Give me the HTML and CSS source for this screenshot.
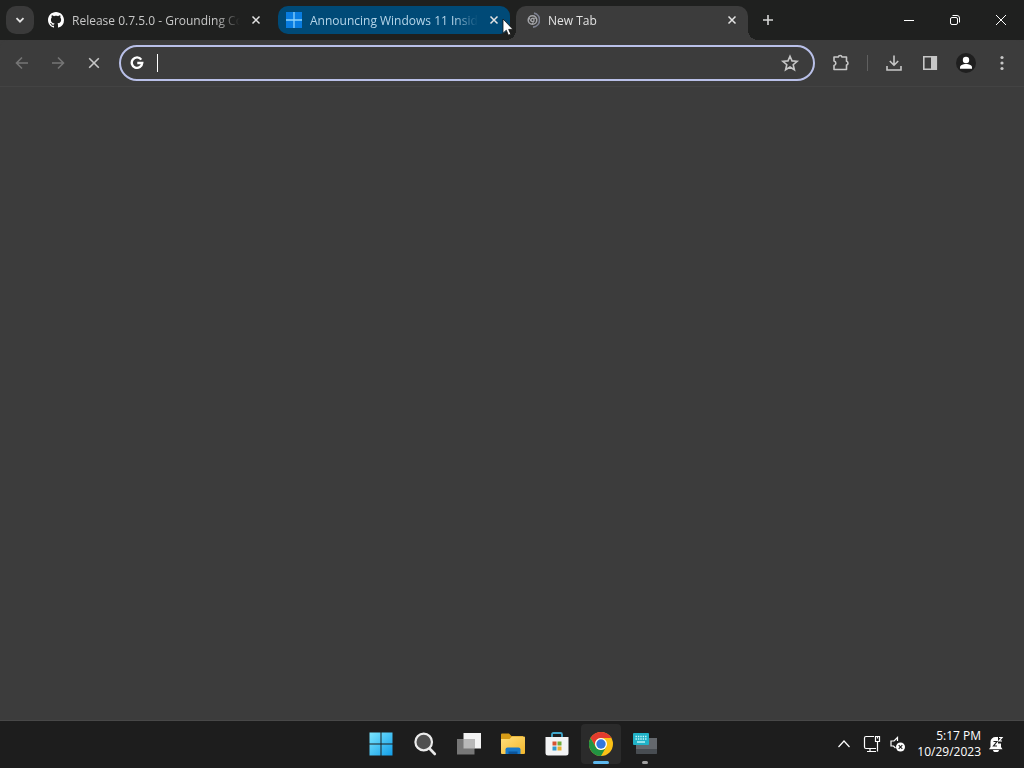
FILE: index.html
```html
<!DOCTYPE html>
<html lang="en">
<head>
  <meta charset="UTF-8">
  <title>New Tab</title>
  <link rel="stylesheet" href="styles.css">
</head>
<body>
  <header class="tab-strip">
    <button class="tab-search" aria-label="Search tabs">
      <svg width="16" height="16" viewBox="0 0 16 16"><path d="M4.5 6.2 8 9.7l3.500-3.500" fill="none" stroke="#e3e3e3" stroke-width="1.800"/></svg>
    </button>

    <div class="tab">
      <svg class="favicon" viewBox="0 0 16 16"><path fill="#fff" d="M8 0C3.580 0 0 3.580 0 8c0 3.540 2.290 6.530 5.470 7.590.4.070.55-.17.55-.38 0-.19-.01-.82-.01-1.490-2.010.37-2.530-.49-2.690-.94-.09-.23-.48-.94-.82-1.130-.28-.15-.68-.52-.01-.53.63-.01 1.080.58 1.230.82.72 1.210 1.870.87 2.330.66.07-.52.28-.87.51-1.070-1.780-.2-3.640-.89-3.640-3.950 0-.87.31-1.590.82-2.150-.08-.2-.36-1.020.08-2.120 0 0 .67-.21 2.200.82.64-.18 1.320-.27 2-.27s1.360.09 2 .27c1.530-1.040 2.200-.82 2.200-.82.44 1.100.16 1.920.08 2.120.51.56.82 1.270.82 2.150 0 3.070-1.870 3.750-3.650 3.950.29.25.54.73.54 1.480 0 1.070-.01 1.930-.01 2.200 0 .21.15.46.55.38A8.010 8.010 0 0 0 16 8c0-4.420-3.580-8-8-8z"/></svg>
      <span class="tab-title">Release 0.7.5.0 - Grounding Co</span>
      <button class="tab-close" aria-label="Close tab"><svg width="16" height="16" viewBox="0 0 16 16"><path d="m4.500 4.500 7 7m0-7-7 7"/></svg></button>
    </div>

    <div class="tab tab-hover">
      <svg class="favicon" viewBox="0 0 16 16"><path fill="#087ce0" d="M0 0h16v16H0z"/><path d="M8 0v16M0 8h16" stroke="#8bd2fa" stroke-width="1.300"/></svg>
      <span class="tab-title">Announcing Windows 11 Insid</span>
      <button class="tab-close" aria-label="Close tab"><svg width="16" height="16" viewBox="0 0 16 16"><path d="m4.500 4.500 7 7m0-7-7 7"/></svg></button>
    </div>

    <div class="tab tab-active">
      <svg class="favicon" viewBox="0 0 16 16" fill="none" stroke="#a4a5a9">
        <circle cx="8.500" cy="8" r="4.300" stroke-width="1.500"/>
        <circle cx="8.500" cy="8" r="1.600" stroke-width="1.300"/>
        <path d="M8.500 6.200h4M6.900 9 5 5.800M10 9l-2 3.300" stroke-width="1"/>
        <path d="M10 1.100A7.100 7.100 0 0 1 9 15.100" stroke="#7d8191" stroke-width="1.700"/>
      </svg>
      <span class="tab-title">New Tab</span>
      <button class="tab-close" aria-label="Close tab"><svg width="16" height="16" viewBox="0 0 16 16"><path d="m4.500 4.500 7 7m0-7-7 7"/></svg></button>
    </div>

    <button class="new-tab" aria-label="New tab">
      <svg width="16" height="16" viewBox="0 0 16 16"><path d="M8 3v10M3 8h10" stroke="#d5d5d5" stroke-width="1.600"/></svg>
    </button>

    <div class="window-controls">
      <button aria-label="Minimize"><svg width="12" height="12" viewBox="0 0 12 12"><path d="M1 6.500h10"/></svg></button>
      <button aria-label="Restore"><svg width="12" height="12" viewBox="0 0 12 12"><rect x="1.500" y="3.500" width="7" height="7" rx="1.500"/><path d="M3.500 1.500h4.500a2.500 2.500 0 0 1 2.500 2.500v4.500"/></svg></button>
      <button aria-label="Close"><svg width="12" height="12" viewBox="0 0 12 12"><path d="m1 1 10 10m0-10L1 11"/></svg></button>
    </div>

    <svg class="cursor" viewBox="0 0 12 19"><path d="M1 1v14.200l3.300-3 2.100 5 2.400-1-2.100-4.800H11z" fill="#fff" stroke="#111" stroke-width=".8"/></svg>
  </header>

  <nav class="toolbar">
    <div class="nav-buttons">
      <button aria-label="Back" disabled><svg viewBox="0 0 20 20"><path d="M16 10H4.500m5.500-5.500L4.500 10l5.500 5.500"/></svg></button>
      <button aria-label="Forward" disabled><svg viewBox="0 0 20 20"><path d="M4 10h11.500M10 4.500l5.500 5.500-5.500 5.500"/></svg></button>
      <button aria-label="Stop loading"><svg viewBox="0 0 20 20"><path d="m5.200 5.200 9.600 9.600m0-9.600-9.600 9.600"/></svg></button>
    </div>

    <div class="omnibox">
      <svg class="google" viewBox="0 0 16 16"><path d="M12.900 4.100A6 6 0 1 0 14 8H8.300" fill="none" stroke="#fff" stroke-width="2.700"/></svg>
      <span class="caret"></span>
      <input type="text" aria-label="Address and search bar">
      <button aria-label="Bookmark this tab"><svg viewBox="0 0 20 20"><path d="m10 3.200 2 4.700 5.100.4-3.900 3.400 1.200 5-4.400-2.700-4.400 2.700 1.200-5-3.900-3.400 5.100-.4z"/></svg></button>
    </div>

    <div class="tools">
      <button aria-label="Extensions"><svg viewBox="0 0 20 20"><path d="M3 4h4.300a1.900 1.900 0 0 1 3.700 0h4.500v4.300a1.900 1.900 0 0 1 0 3.700v4.500H3v-4a2.300 2.300 0 0 0 0-4.500z" stroke-linejoin="round"/></svg></button>
      <span class="divider"></span>
      <button aria-label="Downloads"><svg viewBox="0 0 20 20"><path d="M10 2.500v9.500M5.800 8l4.200 4.200L14.200 8M3 13v4h14v-4"/></svg></button>
      <button aria-label="Side panel"><svg viewBox="0 0 20 20"><path d="M3.800 3.800h12.500v12.500H3.800z"/><path d="M11 3.500h5.500v13H11z" fill="#c7c7c7" stroke="none"/></svg></button>
      <button aria-label="Profile"><svg viewBox="0 0 20 20"><circle cx="10" cy="10" r="10" fill="#1f1f1f" stroke="none"/><circle cx="10" cy="7" r="3.200" fill="#fff" stroke="none"/><path d="M4 15.800v-1.300c0-2.200 3-3.400 6-3.400s6 1.200 6 3.400v1.300z" fill="#fff" stroke="none"/></svg></button>
      <button aria-label="Menu"><svg viewBox="0 0 20 20"><g fill="#c7c7c7" stroke="none"><circle cx="10" cy="4.500" r="1.600"/><circle cx="10" cy="10" r="1.600"/><circle cx="10" cy="15.500" r="1.600"/></g></svg></button>
    </div>
  </nav>

  <main class="page"></main>

  <footer class="taskbar">
    <div class="apps">
      <button class="app" aria-label="Start">
        <svg viewBox="0 0 24 24">
          <defs><linearGradient id="win" x1="0" y1="0" x2="24" y2="24" gradientUnits="userSpaceOnUse"><stop stop-color="#7ee8ff"/><stop offset="1" stop-color="#0f9ce8"/></linearGradient></defs>
          <path fill="url(#win)" d="M.5.500h11v11H.5zM12.500.500h11v11h-11zM.5 12.500h11v11H.5zM12.500 12.500h11v11h-11z"/>
        </svg>
      </button>
      <button class="app" aria-label="Search">
        <svg viewBox="0 0 24 24"><path d="m17 17 4.800 5" stroke="#e8e8e8" stroke-width="2.600" stroke-linecap="round"/><circle cx="10.700" cy="10" r="8.300" fill="#505050" stroke="#ececec" stroke-width="2.200"/></svg>
      </button>
      <button class="app" aria-label="Task view">
        <svg viewBox="0 0 24 24"><path d="M6.500 1H24v15.500H6.500z" fill="#f3f3f3"/><path d="M0 7h17.500v15.500H0z" fill="#777"/><path d="M6.500 7h11v9.500h-11z" fill="#b8b8b8"/></svg>
      </button>
      <button class="app" aria-label="File Explorer">
        <svg viewBox="0 0 24 24">
          <defs><linearGradient id="folder" x1="0" y1="0" x2="1" y2="1"><stop stop-color="#ffe07c"/><stop offset="1" stop-color="#f3b62b"/></linearGradient></defs>
          <path d="M0 2.500Q0 1.500 1 1.500h7l2.500 2.500H22v5H0z" fill="#d69b16"/>
          <path d="M0 7h8.500L11 4.500h12q1 0 1 1V21q0 1-1 1H1q-1 0-1-1z" fill="url(#folder)"/>
          <path d="M4.500 22v-4.500q0-2 2-2h11q2 0 2 2V22z" fill="#1879c9"/><path d="M7.500 22v-2.500h9V22z" fill="#0b559c"/>
        </svg>
      </button>
      <button class="app" aria-label="Microsoft Store">
        <svg viewBox="0 0 24 24">
          <path d="M7 6V2.500Q7 1 8.500 1h7Q17 1 17 2.500V6" fill="none" stroke="#42a8cc" stroke-width="1.800"/>
          <path d="M.5 5h23v16q0 2.500-2.500 2.500H3Q.5 23.500.500 21z" fill="#f3f4f5"/>
          <path d="M7.500 9.500h4v4h-4z" fill="#d65332"/><path d="M12.500 9.500h4v4h-4z" fill="#6fac39"/><path d="M7.500 14.500h4v4h-4z" fill="#3398cb"/><path d="M12.500 14.500h4v4h-4z" fill="#e8b031"/>
        </svg>
      </button>
      <button class="app app-active" aria-label="Google Chrome">
        <svg viewBox="0 0 24 24">
          <circle cx="12" cy="12" r="12" fill="#fbc116"/>
          <path d="M1.600 6A12 12 0 0 1 22.400 6H12a6 6 0 0 0-5.200 9z" fill="#e33b2e"/>
          <path d="M1.600 6A12 12 0 0 0 12 24l5.200-9a6 6 0 0 1-10.400 0z" fill="#229342"/>
          <circle cx="12" cy="12" r="6" fill="#fff"/><circle cx="12" cy="12" r="4.700" fill="#3477dc"/>
        </svg>
      </button>
      <button class="app app-running" aria-label="Touch keyboard">
        <svg viewBox="0 0 24 24">
          <path d="M3 6h21v14q0 2-2 2H5q-2 0-2-2z" fill="#64686d"/><path d="M3 17h21v4q0 1-1 1H4q-1 0-1-1z" fill="#484d52"/>
          <rect y="1" width="16" height="12" rx="1" fill="#20b2c7"/>
          <path d="M2.500 4.500h11M2.500 7h11" stroke="#c5f6fa" stroke-width="1.400" stroke-dasharray="1.400 1"/><path d="M4 10h8" stroke="#c5f6fa" stroke-width="1.400"/>
        </svg>
      </button>
    </div>

    <div class="tray">
      <button aria-label="Show hidden icons"><svg width="16" height="16" viewBox="0 0 16 16"><path d="m2.500 11 5.500-6 5.500 6"/></svg></button>
      <button aria-label="Network"><svg width="18" height="18" viewBox="0 0 18 18"><path d="M11 1.500H3Q1.500 1.500 1.500 3v9Q1.500 13.500 3 13.500h10M7 13.500v3M4 16.500h9M12.500 1.500h4v5h-4zM14.500 6.500v10M14.500 1.500v2"/></svg></button>
      <button aria-label="Volume"><svg width="18" height="18" viewBox="0 0 18 18"><path d="M8.500 6V2.500L5 6H2v5h2.500l2 2"/><circle cx="11.500" cy="12" r="4.500" fill="#fff" stroke="none"/><path d="m9.700 10.200 3.600 3.600m0-3.600-3.600 3.600" stroke="#222"/></svg></button>
      <div class="clock"><time>5:17 PM</time><time>10/29/2023</time></div>
      <button aria-label="Notifications"><svg width="16" height="16" viewBox="0 0 16 16"><path d="M2.500 6a5 5 0 0 1 5-5h2.500v6.500h3V11l1.500 2.200H1L2.500 11zM5 14h6a3 2.200 0 0 1-6 0z" fill="#fff" stroke="none"/><path d="M5.500 5.500H9l-3.500 4.500H9" stroke="#222"/><path d="M11 1.500h3l-3 3.500h3"/></svg></button>
    </div>
  </footer>
</body>
</html>
```

FILE: styles.css
```css
* {
  box-sizing: border-box;
}

body {
  font-family: 'Open Sans', 'Noto Sans', sans-serif;
  font-size: 12px;
  background: #3c3c3c;
  color: #e3e3e3;
  display: flex;
  flex-direction: column;
  min-height: 100vh;
  margin: 0;
}

button {
  display: flex;
  align-items: center;
  justify-content: center;
  flex-shrink: 0;
  padding: 0;
  border: none;
  background: none;
  color: inherit;
}

svg {
  display: block;
  flex-shrink: 0;
}

/* tabs */
.tab-strip {
  position: relative;
  display: flex;
  align-items: center;
  height: 40px;
  padding-left: 6px;
  background: #1f201f;
}

.tab-search {
  width: 28px;
  height: 28px;
  margin-right: 6px;
  border-radius: 10px;
  background: #3a3a3a;
}

.tab {
  display: flex;
  align-items: center;
  gap: 8px;
  flex: 0 1 232px;
  min-width: 0;
  height: 28px;
  margin-right: 6px;
  padding: 0 8px;
  border-radius: 10px;
  color: #c7c7c7;
}

.tab-hover {
  background: #004a77;
  color: #b5d5e9;
}

.tab-active {
  position: relative;
  height: 34px;
  padding-bottom: 6px;
  align-self: flex-end;
  border-radius: 10px 10px 0 0;
  background: #3c3c3c;
  color: #e3e3e3;
}

/* flared feet of the selected tab */
.tab-active::before,
.tab-active::after {
  content: '';
  position: absolute;
  bottom: 0;
  width: 10px;
  height: 10px;
}

.tab-active::before {
  right: 100%;
  background: radial-gradient(circle at 0 0, transparent 10px, #3c3c3c 10px);
}

.tab-active::after {
  left: 100%;
  background: radial-gradient(circle at 100% 0, transparent 10px, #3c3c3c 10px);
}

.favicon {
  width: 16px;
  height: 16px;
}

.tab-title {
  flex: 1;
  min-width: 0;
  padding-top: 2px;
  overflow: hidden;
  font-weight: 500;
  line-height: 16px;
  white-space: nowrap;
  mask-image: linear-gradient(to right, #000 calc(100% - 24px), transparent);
}

.tab-close {
  width: 16px;
  height: 16px;
}

.tab-close path {
  fill: none;
  stroke: #e3e3e3;
  stroke-width: 1.5;
}

.new-tab {
  width: 28px;
  height: 28px;
}

.window-controls {
  display: flex;
  margin-left: auto;
}

.window-controls button {
  width: 46px;
  height: 40px;
}

.window-controls svg {
  fill: none;
  stroke: #fff;
}

.cursor {
  position: absolute;
  left: 502px;
  top: 18px;
  width: 12px;
  height: 19px;
}

/* toolbar */
.toolbar {
  display: flex;
  align-items: center;
  height: 47px;
  padding: 0 8px;
  border-bottom: 1px solid #434343;
  border-radius: 8px 8px 0 0;
  background: #3c3c3c;
}

.toolbar button {
  width: 28px;
  height: 28px;
}

.toolbar button svg {
  width: 20px;
  height: 20px;
  fill: none;
  stroke: #c7c7c7;
  stroke-width: 1.6;
}

.toolbar button:disabled svg {
  stroke: #757575;
}

.nav-buttons {
  display: flex;
  gap: 8px;
}

.omnibox {
  display: flex;
  align-items: center;
  flex: 1;
  min-width: 0;
  height: 36px;
  margin: 0 12px 0 11px;
  padding: 0 9px;
  border: 2px solid #b9c0e8;
  border-radius: 18px;
}

.google {
  width: 14px;
  height: 14px;
}

.caret {
  width: 1px;
  height: 18px;
  margin-left: 13px;
  background: #fff;
}

.omnibox input {
  flex: 1;
  min-width: 0;
  height: 28px;
  padding: 0;
  border: none;
  outline: none;
  background: none;
  color: #fff;
  font: inherit;
}

.tools {
  display: flex;
  align-items: center;
  gap: 8px;
}

.divider {
  width: 1px;
  height: 16px;
  margin: 0 4px;
  background: #606060;
}

.page {
  flex: 1;
}

/* taskbar */
.taskbar {
  display: grid;
  grid-template-columns: 1fr auto 1fr;
  align-items: center;
  height: 48px;
  padding: 0 0 2px 1px;
  border-top: 1px solid #484848;
  background: #1d1d1d;
}

.apps {
  display: flex;
  grid-column: 2;
  gap: 4px;
}

.app {
  position: relative;
  width: 40px;
  height: 40px;
  border-radius: 4px;
}

.app svg {
  width: 24px;
  height: 24px;
}

.app-active {
  background: #2b2b2b;
}

.app-active::after,
.app-running::after {
  content: '';
  position: absolute;
  bottom: 0;
  width: 6px;
  height: 3px;
  border-radius: 2px;
  background: #a0a0a0;
}

.app-active::after {
  width: 16px;
  background: #5cb8ee;
}

.tray {
  display: flex;
  align-items: center;
  justify-self: end;
  padding-right: 20px;
  color: #fff;
}

.tray button {
  margin-right: 8px;
}

.tray button:first-child {
  margin-right: 11px;
}

.tray button:last-child {
  margin: 0 0 0 7px;
}

.tray svg {
  fill: none;
  stroke: #fff;
  stroke-width: 1.2;
}

.clock {
  display: flex;
  flex-direction: column;
  align-items: flex-end;
  margin-left: 2px;
  line-height: 16px;
}
```
